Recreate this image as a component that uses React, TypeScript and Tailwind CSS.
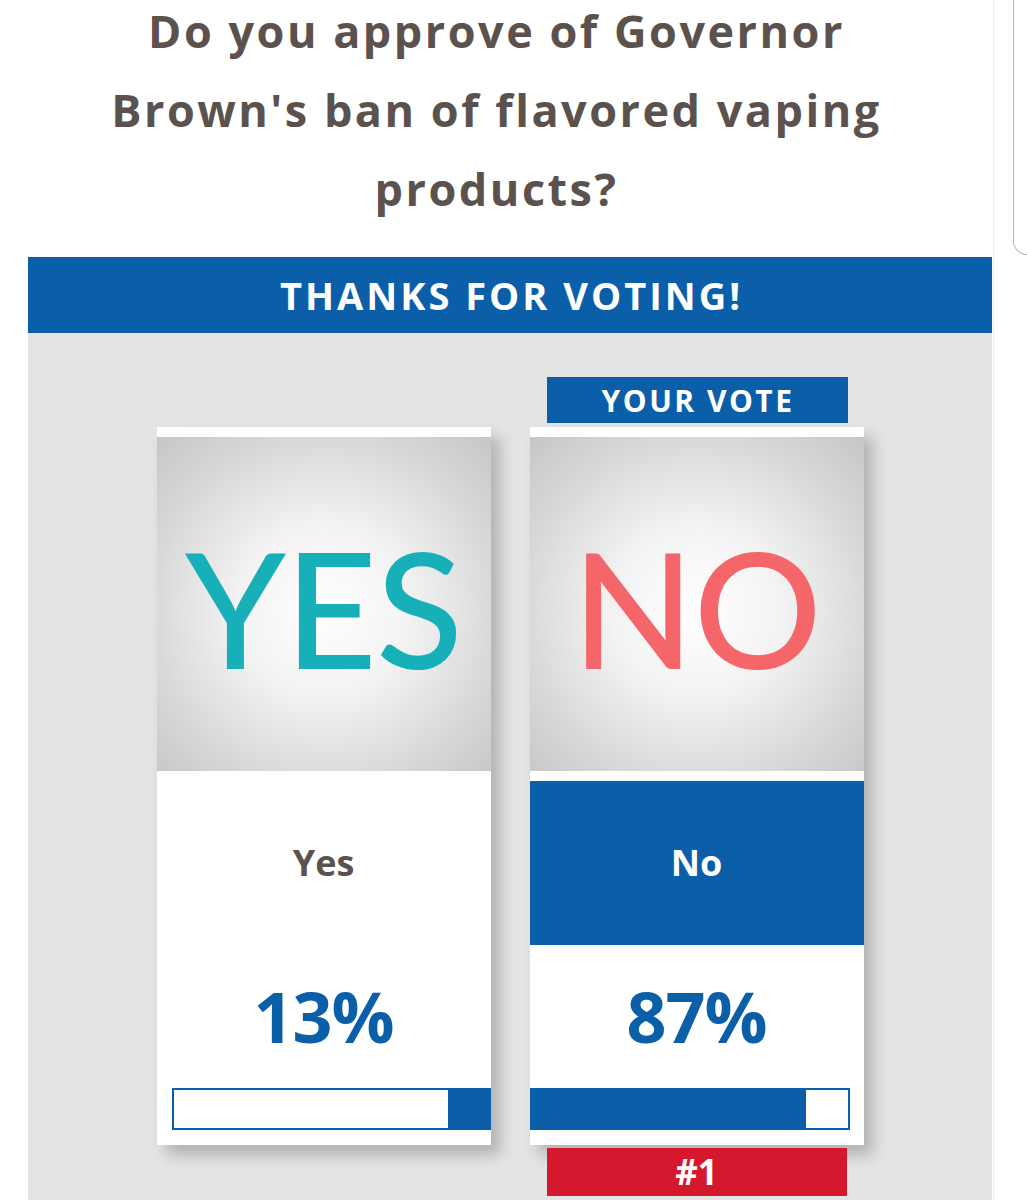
import React from "react";

type Option = {
  word: string;
  wordColor: string;
  label: string;
  percent: number;
  mine: boolean;
  barSide: "left" | "right";
};

const options: Option[] = [
  { word: "YES", wordColor: "text-[#17b0b9]", label: "Yes", percent: 13, mine: false, barSide: "right" },
  { word: "NO", wordColor: "text-[#f4666a]", label: "No", percent: 87, mine: true, barSide: "left" },
];

const sans = "font-['Open_Sans',_'Liberation_Sans',_sans-serif]";

const questionLines = ["Do you approve of Governor", "Brown's ban of flavored vaping", "products?"];

function ResultCard({ opt }: { opt: Option }) {
  return (
    <div className="flex w-[334px] flex-col">
      <div className="mb-[4px] h-[46px] px-[17px]">
        {opt.mine && (
          <div className="flex h-full w-[301px] items-center justify-center bg-[#0b5ea8] pl-[2px] pt-[1px] text-[30px] font-bold tracking-[2.5px] text-white">
            YOUR VOTE
          </div>
        )}
      </div>
      <div className="flex flex-col bg-white pt-[10px] shadow-[9px_10px_14px_rgba(0,0,0,0.22)]">
        <div className="flex h-[334px] items-center justify-center bg-[radial-gradient(circle_at_50%_52%,#ffffff_0%,#f3f3f3_35%,#d6d6d6_75%,#c6c6c6_100%)]">
          <span
            className={`font-['Lato',_sans-serif] text-[160px] font-medium leading-none tracking-[-1px] ${opt.wordColor} pt-[6px]`}
          >
            {opt.word}
          </span>
        </div>
        <div className="pt-[10px]">
          <div
            className={`flex h-[164px] items-center justify-center text-[36px] font-bold ${
              opt.mine ? "bg-[#0b5ea8] text-white" : "bg-white text-[#5c524d]"
            }`}
          >
            {opt.label}
          </div>
        </div>
        <div className="flex h-[143px] items-center justify-center pb-[2px] text-[70px] font-bold leading-none tracking-[-1px] text-[#0b5ea8]">
          {opt.percent}%
        </div>
        <div className={`mb-[15px] flex ${opt.barSide === "right" ? "ml-[15px]" : "mr-[14px]"}`}>
          <div
            className={`flex h-[42px] w-full border-2 border-[#0b5ea8] bg-white ${
              opt.barSide === "right" ? "justify-end" : "justify-start"
            }`}
          >
            <div className="h-full bg-[#0b5ea8]" style={{ width: `${opt.percent}%` }} />
          </div>
        </div>
      </div>
      {opt.mine && (
        <div className="mx-[17px] mt-[3px] flex h-[48px] items-center justify-center bg-[#d6182f] text-[35px] font-bold text-white">
          #1
        </div>
      )}
    </div>
  );
}

export default function App() {
  return (
    <div className={`relative h-[1200px] w-[1027px] overflow-hidden bg-white ${sans}`}>
      <div className="flex h-full w-[994px] flex-col border-r border-[#ececec]">
        <h1 className="flex flex-col items-center gap-[17px] px-[20px] text-center text-[45px] font-bold leading-[62px] tracking-[2.5px] text-[#5c524d]">
          {questionLines.map((line) => (
            <span key={line}>{line}</span>
          ))}
        </h1>
        <div className="ml-[28px] mt-[37px] flex w-[964px] flex-1 flex-col">
          <div className="flex h-[76px] items-center justify-center bg-[#0b5ea8] pl-[3px] text-[38px] font-bold tracking-[3px] text-white">
            THANKS FOR VOTING!
          </div>
          <div className="flex flex-1 justify-center gap-[39px] bg-[#e4e4e4] pt-[44px]">
            {options.map((o) => (
              <ResultCard key={o.word} opt={o} />
            ))}
          </div>
        </div>
      </div>
      {/* edge of the notification shade peeking in at top right */}
      <div className="absolute left-[1013px] top-[-10px] h-[265px] w-[40px] rounded-bl-[14px] border-b border-l border-[#b5b5b5]" />
    </div>
  );
}
